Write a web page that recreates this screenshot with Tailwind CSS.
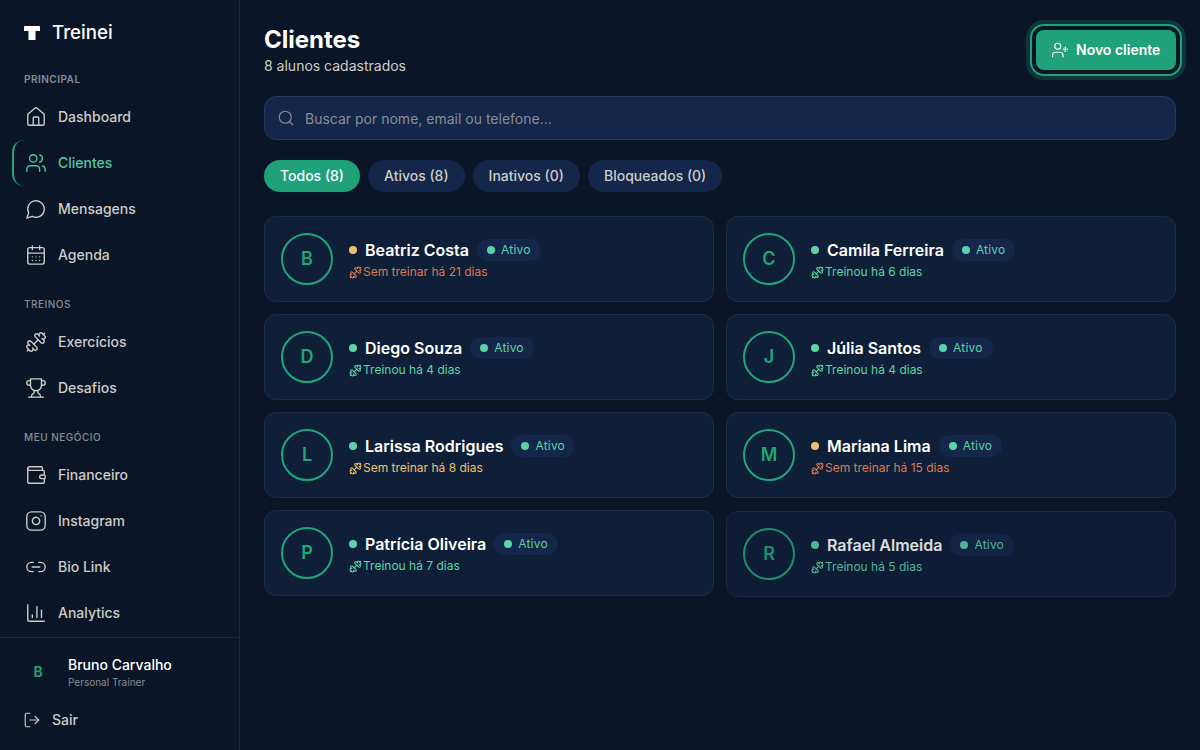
<!DOCTYPE html>
<html lang="pt-BR">
<head>
<meta charset="utf-8">
<title>Treinei</title>
<script src="https://cdn.jsdelivr.net/npm/@tailwindcss/browser@4"></script>
</head>
<body class="bg-[#0a1628] font-['Inter',sans-serif] text-white">
<svg class="hidden" xmlns="http://www.w3.org/2000/svg">
<symbol id="dumbbell" viewBox="0 0 24 24"><path d="M14.4 14.4 9.6 9.6"/><path d="M18.657 21.485a2 2 0 1 1-2.829-2.828l-1.767 1.768a2 2 0 1 1-2.829-2.829l6.364-6.364a2 2 0 1 1 2.829 2.829l-1.768 1.767a2 2 0 1 1 2.828 2.829z"/><path d="m21.5 21.5-1.4-1.4"/><path d="M3.9 3.9 2.5 2.5"/><path d="M6.404 12.768a2 2 0 1 1-2.829-2.829l1.768-1.767a2 2 0 1 1-2.828-2.829l2.828-2.828a2 2 0 1 1 2.829 2.828l1.767-1.768a2 2 0 1 1 2.829 2.829z"/></symbol>
</svg>
<div class="flex h-[750px] w-[1200px] overflow-hidden">
  <aside class="flex h-full w-[240px] shrink-0 flex-col border-r border-[#1a2940] bg-[#0a1628]">
    <div class="flex items-center gap-3 px-6 pt-[21px] pb-2">
      <svg class="h-[16px] w-[16px]" viewBox="0 0 16 16" fill="#fff"><path d="M0 1h16v5h-4.500v9h-7V6H0z"/></svg>
      <span class="text-[18.7px] leading-6 font-medium">Treinei</span>
    </div>
    <nav class="flex flex-col">
      <div class="px-6 pt-[18px] pb-[7px] text-[10px] leading-4 font-semibold tracking-[0.5px] text-[#8a8d93]">PRINCIPAL</div>
      <a class="mx-3 flex h-[46px] items-center gap-[11px] rounded-xl border-l-2 border-transparent px-[11px] text-sm font-medium text-[#cfccc5]"><svg class="h-[22px] w-[22px]" viewBox="0 0 24 24" fill="none" stroke="currentColor" stroke-width="1.5" stroke-linecap="round" stroke-linejoin="round"><path d="M15 21v-8a1 1 0 0 0-1-1h-4a1 1 0 0 0-1 1v8"/><path d="M3 10a2 2 0 0 1 .709-1.528l7-5.999a2 2 0 0 1 2.582 0l7 5.999A2 2 0 0 1 21 10v9a2 2 0 0 1-2 2H5a2 2 0 0 1-2-2z"/></svg>Dashboard</a>
      <a class="mx-3 flex h-[46px] items-center gap-[11px] rounded-xl border-l-2 border-[#1fa67a] px-[11px] text-sm font-medium text-[#4fc9a0]"><svg class="h-[22px] w-[22px]" viewBox="0 0 24 24" fill="none" stroke="currentColor" stroke-width="1.5" stroke-linecap="round" stroke-linejoin="round"><path d="M16 21v-2a4 4 0 0 0-4-4H6a4 4 0 0 0-4 4v2"/><circle cx="9" cy="7" r="4"/><path d="M22 21v-2a4 4 0 0 0-3-3.870"/><path d="M16 3.130a4 4 0 0 1 0 7.750"/></svg>Clientes</a>
      <a class="mx-3 flex h-[46px] items-center gap-[11px] rounded-xl border-l-2 border-transparent px-[11px] text-sm font-medium text-[#cfccc5]"><svg class="h-[22px] w-[22px]" viewBox="0 0 24 24" fill="none" stroke="currentColor" stroke-width="1.5" stroke-linecap="round" stroke-linejoin="round"><path d="M7.900 20A9 9 0 1 0 4 16.100L2 22Z"/></svg>Mensagens</a>
      <a class="mx-3 flex h-[46px] items-center gap-[11px] rounded-xl border-l-2 border-transparent px-[11px] text-sm font-medium text-[#cfccc5]"><svg class="h-[22px] w-[22px]" viewBox="0 0 24 24" fill="none" stroke="currentColor" stroke-width="1.5" stroke-linecap="round" stroke-linejoin="round"><path d="M8 2v4"/><path d="M16 2v4"/><rect x="3" y="4" width="18" height="18" rx="2"/><path d="M3 10h18"/><path d="M8 14h.01"/><path d="M12 14h.01"/><path d="M16 14h.01"/><path d="M8 18h.01"/><path d="M12 18h.01"/><path d="M16 18h.01"/></svg>Agenda</a>
      <div class="px-6 pt-[18px] pb-[7px] text-[10px] leading-4 font-medium tracking-[0.5px] text-[#8a8d93]">TREINOS</div>
      <a class="mx-3 flex h-[46px] items-center gap-[11px] rounded-xl border-l-2 border-transparent px-[11px] text-sm font-medium text-[#cfccc5]"><svg class="h-[22px] w-[22px] -scale-x-100" fill="none" stroke="currentColor" stroke-width="1.5" stroke-linecap="round" stroke-linejoin="round"><use href="#dumbbell"/></svg>Exercícios</a>
      <a class="mx-3 flex h-[46px] items-center gap-[11px] rounded-xl border-l-2 border-transparent px-[11px] text-sm font-medium text-[#cfccc5]"><svg class="h-[22px] w-[22px]" viewBox="0 0 24 24" fill="none" stroke="currentColor" stroke-width="1.5" stroke-linecap="round" stroke-linejoin="round"><path d="M6 9H4.500a2.500 2.500 0 0 1 0-5H6"/><path d="M18 9h1.500a2.500 2.500 0 0 0 0-5H18"/><path d="M4 22h16"/><path d="M10 14.660V17c0 .55-.47.98-.97 1.210C7.850 18.750 7 20.240 7 22"/><path d="M14 14.660V17c0 .55.47.98.97 1.210C16.150 18.750 17 20.240 17 22"/><path d="M18 2H6v7a6 6 0 0 0 12 0V2Z"/></svg>Desafios</a>
      <div class="px-6 pt-[18px] pb-[7px] text-[10px] leading-4 font-medium tracking-[0.5px] text-[#8a8d93]">MEU NEGÓCIO</div>
      <a class="mx-3 flex h-[46px] items-center gap-[11px] rounded-xl border-l-2 border-transparent px-[11px] text-sm font-medium text-[#cfccc5]"><svg class="h-[22px] w-[22px]" viewBox="0 0 24 24" fill="none" stroke="currentColor" stroke-width="1.5" stroke-linecap="round" stroke-linejoin="round"><path d="M19 7V4a1 1 0 0 0-1-1H5a2 2 0 0 0 0 4h15a1 1 0 0 1 1 1v4h-3a2 2 0 0 0 0 4h3a1 1 0 0 0 1-1v-2a1 1 0 0 0-1-1"/><path d="M3 5v14a2 2 0 0 0 2 2h15a1 1 0 0 0 1-1v-4"/></svg>Financeiro</a>
      <a class="mx-3 flex h-[46px] items-center gap-[11px] rounded-xl border-l-2 border-transparent px-[11px] text-sm font-medium text-[#cfccc5]"><svg class="h-[22px] w-[22px]" viewBox="0 0 24 24" fill="none" stroke="currentColor" stroke-width="1.5" stroke-linecap="round" stroke-linejoin="round"><rect x="2" y="2" width="20" height="20" rx="5"/><path d="M16 11.370A4 4 0 1 1 12.630 8 4 4 0 0 1 16 11.370z"/><path d="M17.500 6.500h.01"/></svg>Instagram</a>
      <a class="mx-3 flex h-[46px] items-center gap-[11px] rounded-xl border-l-2 border-transparent px-[11px] text-sm font-medium text-[#cfccc5]"><svg class="h-[22px] w-[22px]" viewBox="0 0 24 24" fill="none" stroke="currentColor" stroke-width="1.5" stroke-linecap="round" stroke-linejoin="round"><path d="M9 17H7A5 5 0 0 1 7 7h2"/><path d="M15 7h2a5 5 0 1 1 0 10h-2"/><path d="M8 12h8"/></svg>Bio Link</a>
      <a class="mx-3 flex h-[46px] items-center gap-[11px] rounded-xl border-l-2 border-transparent px-[11px] text-sm font-medium text-[#cfccc5]"><svg class="h-[22px] w-[22px]" viewBox="0 0 24 24" fill="none" stroke="currentColor" stroke-width="1.5" stroke-linecap="round" stroke-linejoin="round"><path d="M3 3v16a2 2 0 0 0 2 2h16"/><path d="M18 17V9"/><path d="M13 17V5"/><path d="M8 17v-3"/></svg>Analytics</a>
    </nav>
    <div class="mt-px border-t border-[#1a2940] px-5 pt-4">
      <div class="flex items-center gap-3">
        <div class="flex h-9 w-9 items-center justify-center text-sm font-semibold text-[#1fa67a]">B</div>
        <div>
          <div class="text-sm leading-5 font-medium">Bruno Carvalho</div>
          <div class="-mt-px text-[10px] leading-4 text-[#8a8d93]">Personal Trainer</div>
        </div>
      </div>
      <a class="mt-5 flex items-center gap-[11px] px-[3px] text-sm leading-5 font-medium text-[#cfccc5]"><svg class="h-[18px] w-[18px]" viewBox="0 0 24 24" fill="none" stroke="currentColor" stroke-width="1.5" stroke-linecap="round" stroke-linejoin="round"><path d="M9 21H5a2 2 0 0 1-2-2V5a2 2 0 0 1 2-2h4"/><path d="m16 17 5-5-5-5"/><path d="M21 12H9"/></svg>Sair</a>
    </div>
  </aside>

  <main class="min-w-0 flex-1 px-6 pt-6">
    <header class="flex items-start justify-between">
      <div>
        <h1 class="text-2xl leading-8 font-bold">Clientes</h1>
        <p class="text-sm leading-5 text-[#cfccc5]">8 alunos cadastrados</p>
      </div>
      <button class="mt-1.5 flex h-10 w-[140px] items-center gap-[7px] rounded-lg bg-[#1fa27a] px-[15px] text-sm font-semibold text-white shadow-[0_0_0_4px_#0a1628,0_0_0_6px_#1fa27a,0_0_0_10px_rgba(31,166,122,0.22)]"><svg class="h-[18px] w-[18px]" viewBox="0 0 24 24" fill="none" stroke="currentColor" stroke-width="1.5" stroke-linecap="round" stroke-linejoin="round"><path d="M16 21v-2a4 4 0 0 0-4-4H6a4 4 0 0 0-4 4v2"/><circle cx="9" cy="7" r="4"/><path d="M19 8v6"/><path d="M22 11h-6"/></svg>Novo cliente</button>
    </header>

    <div class="mt-5 flex h-11 items-center gap-2.5 rounded-xl border border-[#24375c] bg-[#14264a] px-3 text-sm text-[#8a8d93]">
      <svg class="h-[18px] w-[18px]" viewBox="0 0 24 24" fill="none" stroke="currentColor" stroke-width="1.5" stroke-linecap="round" stroke-linejoin="round"><circle cx="11" cy="11" r="8"/><path d="m21 21-4.300-4.300"/></svg>
      <span class="pt-px">Buscar por nome, email ou telefone...</span>
    </div>

    <div class="mt-5 flex gap-2 text-sm font-medium">
      <span class="flex h-8 items-center rounded-full bg-[#1fa27a] px-4 text-white">Todos (8)</span>
      <span class="flex h-8 items-center rounded-full bg-[#14264a] px-4 text-[#cfccc5]">Ativos (8)</span>
      <span class="flex h-8 items-center rounded-full bg-[#14264a] px-4 text-[#cfccc5]">Inativos (0)</span>
      <span class="flex h-8 items-center rounded-full bg-[#14264a] px-4 text-[#cfccc5]">Bloqueados (0)</span>
    </div>

    <div class="mt-6 grid grid-cols-2 gap-3">
      <article class="flex items-center gap-4 rounded-xl border border-[#1e2d47] bg-[#0f1f38] p-4">
        <div class="flex h-[52px] w-[52px] shrink-0 items-center justify-center rounded-full border-2 border-[#1fa67a] text-lg font-semibold text-[#1fa67a]">B</div>
        <div>
          <div class="flex items-center gap-2"><span class="h-2 w-2 rounded-full bg-[#f0c070]"></span><span class="text-base leading-6 font-semibold">Beatriz Costa</span><span class="flex h-[22px] items-center gap-1.5 rounded-full bg-[#14264a] px-2.5 text-xs tracking-[0.2px] text-[#5dd3a8]"><span class="h-2 w-2 rounded-full bg-[#5dd3a8]"></span>Ativo</span></div>
          <div class="mt-0.5 flex items-center text-xs leading-4 text-[#d97a55]"><svg class="mr-[1.5px] -ml-[0.5px] h-[13px] w-[13px] -scale-x-100" fill="none" stroke="currentColor" stroke-width="2" stroke-linecap="round" stroke-linejoin="round"><use href="#dumbbell"/></svg>Sem treinar há 21 dias</div>
        </div>
      </article>
      <article class="flex items-center gap-4 rounded-xl border border-[#1e2d47] bg-[#0f1f38] p-4">
        <div class="flex h-[52px] w-[52px] shrink-0 items-center justify-center rounded-full border-2 border-[#1fa67a] text-lg font-semibold text-[#1fa67a]">C</div>
        <div>
          <div class="flex items-center gap-2"><span class="h-2 w-2 rounded-full bg-[#5dd3a8]"></span><span class="text-base leading-6 font-semibold">Camila Ferreira</span><span class="flex h-[22px] items-center gap-1.5 rounded-full bg-[#14264a] px-2.5 text-xs tracking-[0.2px] text-[#5dd3a8]"><span class="h-2 w-2 rounded-full bg-[#5dd3a8]"></span>Ativo</span></div>
          <div class="mt-0.5 flex items-center text-xs leading-4 text-[#5dd3a8]"><svg class="mr-[1.5px] -ml-[0.5px] h-[13px] w-[13px] -scale-x-100" fill="none" stroke="currentColor" stroke-width="2" stroke-linecap="round" stroke-linejoin="round"><use href="#dumbbell"/></svg>Treinou há 6 dias</div>
        </div>
      </article>
      <article class="flex items-center gap-4 rounded-xl border border-[#1e2d47] bg-[#0f1f38] p-4">
        <div class="flex h-[52px] w-[52px] shrink-0 items-center justify-center rounded-full border-2 border-[#1fa67a] text-lg font-semibold text-[#1fa67a]">D</div>
        <div>
          <div class="flex items-center gap-2"><span class="h-2 w-2 rounded-full bg-[#5dd3a8]"></span><span class="text-base leading-6 font-semibold">Diego Souza</span><span class="flex h-[22px] items-center gap-1.5 rounded-full bg-[#14264a] px-2.5 text-xs tracking-[0.2px] text-[#5dd3a8]"><span class="h-2 w-2 rounded-full bg-[#5dd3a8]"></span>Ativo</span></div>
          <div class="mt-0.5 flex items-center text-xs leading-4 text-[#5dd3a8]"><svg class="mr-[1.5px] -ml-[0.5px] h-[13px] w-[13px] -scale-x-100" fill="none" stroke="currentColor" stroke-width="2" stroke-linecap="round" stroke-linejoin="round"><use href="#dumbbell"/></svg>Treinou há 4 dias</div>
        </div>
      </article>
      <article class="flex items-center gap-4 rounded-xl border border-[#1e2d47] bg-[#0f1f38] p-4">
        <div class="flex h-[52px] w-[52px] shrink-0 items-center justify-center rounded-full border-2 border-[#1fa67a] text-lg font-semibold text-[#1fa67a]">J</div>
        <div>
          <div class="flex items-center gap-2"><span class="h-2 w-2 rounded-full bg-[#5dd3a8]"></span><span class="text-base leading-6 font-semibold">Júlia Santos</span><span class="flex h-[22px] items-center gap-1.5 rounded-full bg-[#14264a] px-2.5 text-xs tracking-[0.2px] text-[#5dd3a8]"><span class="h-2 w-2 rounded-full bg-[#5dd3a8]"></span>Ativo</span></div>
          <div class="mt-0.5 flex items-center text-xs leading-4 text-[#5dd3a8]"><svg class="mr-[1.5px] -ml-[0.5px] h-[13px] w-[13px] -scale-x-100" fill="none" stroke="currentColor" stroke-width="2" stroke-linecap="round" stroke-linejoin="round"><use href="#dumbbell"/></svg>Treinou há 4 dias</div>
        </div>
      </article>
      <article class="flex items-center gap-4 rounded-xl border border-[#1e2d47] bg-[#0f1f38] p-4">
        <div class="flex h-[52px] w-[52px] shrink-0 items-center justify-center rounded-full border-2 border-[#1fa67a] text-lg font-semibold text-[#1fa67a]">L</div>
        <div>
          <div class="flex items-center gap-2"><span class="h-2 w-2 rounded-full bg-[#5dd3a8]"></span><span class="text-base leading-6 font-semibold">Larissa Rodrigues</span><span class="flex h-[22px] items-center gap-1.5 rounded-full bg-[#14264a] px-2.5 text-xs tracking-[0.2px] text-[#5dd3a8]"><span class="h-2 w-2 rounded-full bg-[#5dd3a8]"></span>Ativo</span></div>
          <div class="mt-0.5 flex items-center text-xs leading-4 text-[#f0c070]"><svg class="mr-[1.5px] -ml-[0.5px] h-[13px] w-[13px] -scale-x-100" fill="none" stroke="currentColor" stroke-width="2" stroke-linecap="round" stroke-linejoin="round"><use href="#dumbbell"/></svg>Sem treinar há 8 dias</div>
        </div>
      </article>
      <article class="flex items-center gap-4 rounded-xl border border-[#1e2d47] bg-[#0f1f38] p-4">
        <div class="flex h-[52px] w-[52px] shrink-0 items-center justify-center rounded-full border-2 border-[#1fa67a] text-lg font-semibold text-[#1fa67a]">M</div>
        <div>
          <div class="flex items-center gap-2"><span class="h-2 w-2 rounded-full bg-[#f0c070]"></span><span class="text-base leading-6 font-semibold">Mariana Lima</span><span class="flex h-[22px] items-center gap-1.5 rounded-full bg-[#14264a] px-2.5 text-xs tracking-[0.2px] text-[#5dd3a8]"><span class="h-2 w-2 rounded-full bg-[#5dd3a8]"></span>Ativo</span></div>
          <div class="mt-0.5 flex items-center text-xs leading-4 text-[#d97a55]"><svg class="mr-[1.5px] -ml-[0.5px] h-[13px] w-[13px] -scale-x-100" fill="none" stroke="currentColor" stroke-width="2" stroke-linecap="round" stroke-linejoin="round"><use href="#dumbbell"/></svg>Sem treinar há 15 dias</div>
        </div>
      </article>
      <article class="flex items-center gap-4 rounded-xl border border-[#1e2d47] bg-[#0f1f38] p-4">
        <div class="flex h-[52px] w-[52px] shrink-0 items-center justify-center rounded-full border-2 border-[#1fa67a] text-lg font-semibold text-[#1fa67a]">P</div>
        <div>
          <div class="flex items-center gap-2"><span class="h-2 w-2 rounded-full bg-[#5dd3a8]"></span><span class="text-base leading-6 font-semibold">Patrícia Oliveira</span><span class="flex h-[22px] items-center gap-1.5 rounded-full bg-[#14264a] px-2.5 text-xs tracking-[0.2px] text-[#5dd3a8]"><span class="h-2 w-2 rounded-full bg-[#5dd3a8]"></span>Ativo</span></div>
          <div class="mt-0.5 flex items-center text-xs leading-4 text-[#5dd3a8]"><svg class="mr-[1.5px] -ml-[0.5px] h-[13px] w-[13px] -scale-x-100" fill="none" stroke="currentColor" stroke-width="2" stroke-linecap="round" stroke-linejoin="round"><use href="#dumbbell"/></svg>Treinou há 7 dias</div>
        </div>
      </article>
      <article class="flex translate-y-px items-center gap-4 rounded-xl border border-[#1e2d47] bg-[#0f1f38] p-4 opacity-85">
        <div class="flex h-[52px] w-[52px] shrink-0 items-center justify-center rounded-full border-2 border-[#1fa67a] text-lg font-semibold text-[#1fa67a]">R</div>
        <div>
          <div class="flex items-center gap-2"><span class="h-2 w-2 rounded-full bg-[#5dd3a8]"></span><span class="text-base leading-6 font-semibold">Rafael Almeida</span><span class="flex h-[22px] items-center gap-1.5 rounded-full bg-[#14264a] px-2.5 text-xs tracking-[0.2px] text-[#5dd3a8]"><span class="h-2 w-2 rounded-full bg-[#5dd3a8]"></span>Ativo</span></div>
          <div class="mt-0.5 flex items-center text-xs leading-4 text-[#5dd3a8]"><svg class="mr-[1.5px] -ml-[0.5px] h-[13px] w-[13px] -scale-x-100" fill="none" stroke="currentColor" stroke-width="2" stroke-linecap="round" stroke-linejoin="round"><use href="#dumbbell"/></svg>Treinou há 5 dias</div>
        </div>
      </article>
    </div>
  </main>
</div>
</body>
</html>
